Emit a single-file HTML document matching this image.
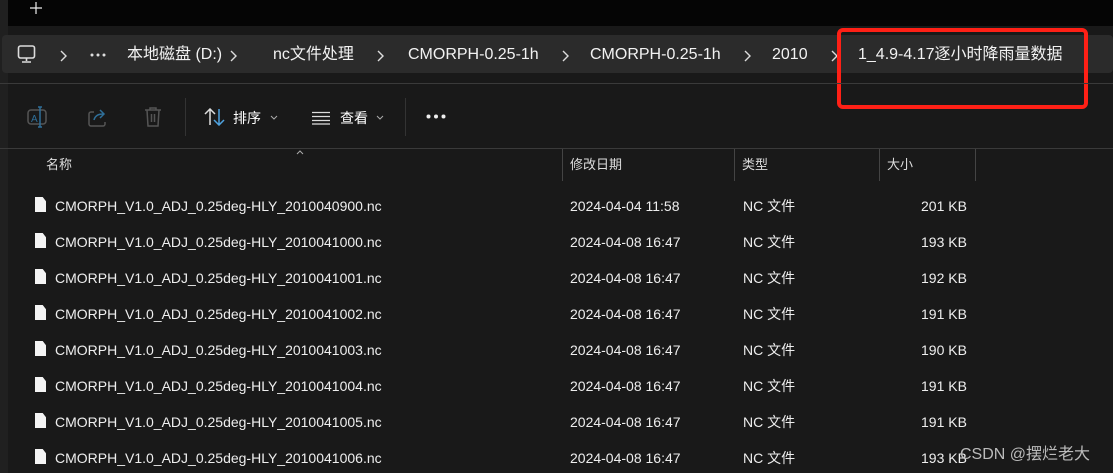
<!DOCTYPE html><html style="width:1113px;height:473px;overflow:hidden"><head><meta charset="utf-8"><style>
*{margin:0;padding:0;box-sizing:border-box}
body{width:1113px;height:473px;background:#191919;overflow:hidden;position:relative;font-family:"Segoe UI","Liberation Sans","Noto Sans CJK SC",sans-serif;color:#fff;font-size:15px;line-height:20px}
.a{position:absolute;white-space:nowrap}
.top{left:8px;top:0;width:1105px;height:26px;background:#050505}
.leftstrip{left:0;top:0;width:8px;height:473px;background:#202020}
.crumb{left:2px;top:35px;width:1111px;height:38px;background:#2b2b2b;border-radius:4px}
.t{top:45px;font-size:16px;line-height:20px;color:#f2f2f2}
.hl{height:1px;background:#3a3a3a;left:0;width:1113px}
.hd{top:156px;font-size:13px;line-height:18px;color:#ddd}
.vl{width:1px;height:32px;top:149px;background:#444}
.row{font-size:14px;line-height:18px;color:#eee}
.row span{position:absolute;top:0}
.ic{width:11px;height:15px;background:#f4f4f4;clip-path:polygon(0 0,70% 0,100% 28%,100% 100%,0 100%)}
</style></head><body>
<div class="a leftstrip"></div>
<div class="a top"></div>
<svg class="a" style="left:30px;top:2px" width="12" height="12"><path d="M6 0v12M0 6h12" stroke="#eee" stroke-width="1.2"/></svg>
<div class="a crumb"></div>
<svg class="a" style="left:17px;top:45px" width="20" height="19" viewBox="0 0 20 19"><rect x="1.5" y="1" width="16" height="12" rx="2" fill="none" stroke="#ddd" stroke-width="1.6"/><path d="M9.5 13v3M5 17h9" stroke="#ddd" stroke-width="1.6"/></svg>
<svg class="a" style="left:59px;top:50px" width="8" height="12"><path d="M2 1l5 5-5 5" fill="none" stroke="#ddd" stroke-width="1.4"/></svg>
<svg class="a" style="left:90px;top:53px" width="16" height="4"><circle cx="2" cy="2" r="1.5" fill="#ddd"/><circle cx="8" cy="2" r="1.5" fill="#ddd"/><circle cx="14" cy="2" r="1.5" fill="#ddd"/></svg>
<div class="a t" style="left:127px">本地磁盘 (D:)</div>
<svg class="a" style="left:229px;top:50px" width="8" height="12"><path d="M2 1l5 5-5 5" fill="none" stroke="#ddd" stroke-width="1.4"/></svg>
<div class="a t" style="left:273px">nc文件处理</div>
<svg class="a" style="left:376px;top:50px" width="8" height="12"><path d="M2 1l5 5-5 5" fill="none" stroke="#ddd" stroke-width="1.4"/></svg>
<div class="a t" style="left:408px">CMORPH-0.25-1h</div>
<svg class="a" style="left:561px;top:50px" width="8" height="12"><path d="M2 1l5 5-5 5" fill="none" stroke="#ddd" stroke-width="1.4"/></svg>
<div class="a t" style="left:590px">CMORPH-0.25-1h</div>
<svg class="a" style="left:743px;top:50px" width="8" height="12"><path d="M2 1l5 5-5 5" fill="none" stroke="#ddd" stroke-width="1.4"/></svg>
<div class="a t" style="left:772px">2010</div>
<svg class="a" style="left:830px;top:50px" width="8" height="12"><path d="M2 1l5 5-5 5" fill="none" stroke="#ddd" stroke-width="1.4"/></svg>
<div class="a t" style="left:858px">1_4.9-4.17逐小时降雨量数据</div>
<div class="a" style="left:837px;top:28px;width:251px;height:81px;border:4px solid #ff2016;border-radius:6px"></div>
<div class="a hl" style="top:83px"></div>
<svg class="a" style="left:26px;top:106px" width="22" height="22" viewBox="0 0 22 22"><rect x="2" y="4" width="18" height="14" rx="3" fill="none" stroke="#555" stroke-width="1.5"/><text x="5" y="16" font-size="10" fill="#2f6f99" font-family="Liberation Sans">A</text><path d="M14 1v20M12 1h4M12 21h4" stroke="#2f6f99" stroke-width="1.5"/></svg>
<svg class="a" style="left:86px;top:106px" width="22" height="22" viewBox="0 0 22 22"><path d="M8 6H5a2 2 0 0 0-2 2v10a2 2 0 0 0 2 2h12a2 2 0 0 0 2-2v-2" fill="none" stroke="#555" stroke-width="1.5"/><path d="M8 14c1-4 4-6 9-6M14 4l4 4-4 4" fill="none" stroke="#2f6f99" stroke-width="1.5"/></svg>
<svg class="a" style="left:143px;top:106px" width="20" height="22" viewBox="0 0 20 22"><path d="M2 4h16M7 4V2h6v2M4 4l1 16h10l1-16M8.5 8v8M11.5 8v8" fill="none" stroke="#555" stroke-width="1.5"/></svg>
<div class="a" style="left:185px;top:98px;width:1px;height:38px;background:#333"></div>
<svg class="a" style="left:204px;top:108px" width="22" height="18" viewBox="0 0 22 18"><path d="M6 17V1M1 6l5-5 5 5" fill="none" stroke="#ddd" stroke-width="1.5"/><path d="M15 1v16M10 12l5 5 5-5" fill="none" stroke="#4fa3e0" stroke-width="1.5"/></svg>
<div class="a" style="left:233px;top:108px;font-size:14px">排序</div>
<svg class="a" style="left:270px;top:115px" width="8" height="5"><path d="M1 1l3 3 3-3" fill="none" stroke="#aaa" stroke-width="1"/></svg>
<svg class="a" style="left:312px;top:111px" width="18" height="14"><path d="M0 1.5h18M0 5.5h18M0 9.5h18M0 13h18" stroke="#ddd" stroke-width="1.3"/></svg>
<div class="a" style="left:340px;top:108px;font-size:14px">查看</div>
<svg class="a" style="left:376px;top:115px" width="8" height="5"><path d="M1 1l3 3 3-3" fill="none" stroke="#aaa" stroke-width="1"/></svg>
<div class="a" style="left:405px;top:98px;width:1px;height:38px;background:#333"></div>
<svg class="a" style="left:426px;top:114px" width="20" height="5"><circle cx="2.5" cy="2.5" r="2" fill="#eee"/><circle cx="10" cy="2.5" r="2" fill="#eee"/><circle cx="17.5" cy="2.5" r="2" fill="#eee"/></svg>
<div class="a hl" style="top:148px"></div>
<svg class="a" style="left:296px;top:150px" width="8" height="5"><path d="M1 4l3-3 3 3" fill="none" stroke="#aaa" stroke-width="1"/></svg>
<div class="a hd" style="left:46px">名称</div>
<div class="a vl" style="left:562px"></div><div class="a hd" style="left:570px">修改日期</div>
<div class="a vl" style="left:734px"></div><div class="a hd" style="left:742px">类型</div>
<div class="a vl" style="left:879px"></div><div class="a hd" style="left:887px">大小</div>
<div class="a vl" style="left:975px"></div>
<div class="a row" style="left:0;top:197px;width:1113px;height:276px;overflow:hidden">
<div style="position:relative;height:36px"><span class="ic" style="left:35px"></span><span style="left:55px">CMORPH_V1.0_ADJ_0.25deg-HLY_2010040900.nc</span><span style="left:570px">2024-04-04 11:58</span><span style="left:743px">NC 文件</span><span style="left:921px">201 KB</span></div>
<div style="position:relative;height:36px"><span class="ic" style="left:35px"></span><span style="left:55px">CMORPH_V1.0_ADJ_0.25deg-HLY_2010041000.nc</span><span style="left:570px">2024-04-08 16:47</span><span style="left:743px">NC 文件</span><span style="left:921px">193 KB</span></div>
<div style="position:relative;height:36px"><span class="ic" style="left:35px"></span><span style="left:55px">CMORPH_V1.0_ADJ_0.25deg-HLY_2010041001.nc</span><span style="left:570px">2024-04-08 16:47</span><span style="left:743px">NC 文件</span><span style="left:921px">192 KB</span></div>
<div style="position:relative;height:36px"><span class="ic" style="left:35px"></span><span style="left:55px">CMORPH_V1.0_ADJ_0.25deg-HLY_2010041002.nc</span><span style="left:570px">2024-04-08 16:47</span><span style="left:743px">NC 文件</span><span style="left:921px">191 KB</span></div>
<div style="position:relative;height:36px"><span class="ic" style="left:35px"></span><span style="left:55px">CMORPH_V1.0_ADJ_0.25deg-HLY_2010041003.nc</span><span style="left:570px">2024-04-08 16:47</span><span style="left:743px">NC 文件</span><span style="left:921px">190 KB</span></div>
<div style="position:relative;height:36px"><span class="ic" style="left:35px"></span><span style="left:55px">CMORPH_V1.0_ADJ_0.25deg-HLY_2010041004.nc</span><span style="left:570px">2024-04-08 16:47</span><span style="left:743px">NC 文件</span><span style="left:921px">191 KB</span></div>
<div style="position:relative;height:36px"><span class="ic" style="left:35px"></span><span style="left:55px">CMORPH_V1.0_ADJ_0.25deg-HLY_2010041005.nc</span><span style="left:570px">2024-04-08 16:47</span><span style="left:743px">NC 文件</span><span style="left:921px">191 KB</span></div>
<div style="position:relative;height:36px"><span class="ic" style="left:35px"></span><span style="left:55px">CMORPH_V1.0_ADJ_0.25deg-HLY_2010041006.nc</span><span style="left:570px">2024-04-08 16:47</span><span style="left:743px">NC 文件</span><span style="left:921px">193 KB</span></div>
</div>
<div class="a" style="left:960px;top:445px;font-size:16px;line-height:20px;color:#bbb">CSDN @摆烂老大</div>
</body></html>
